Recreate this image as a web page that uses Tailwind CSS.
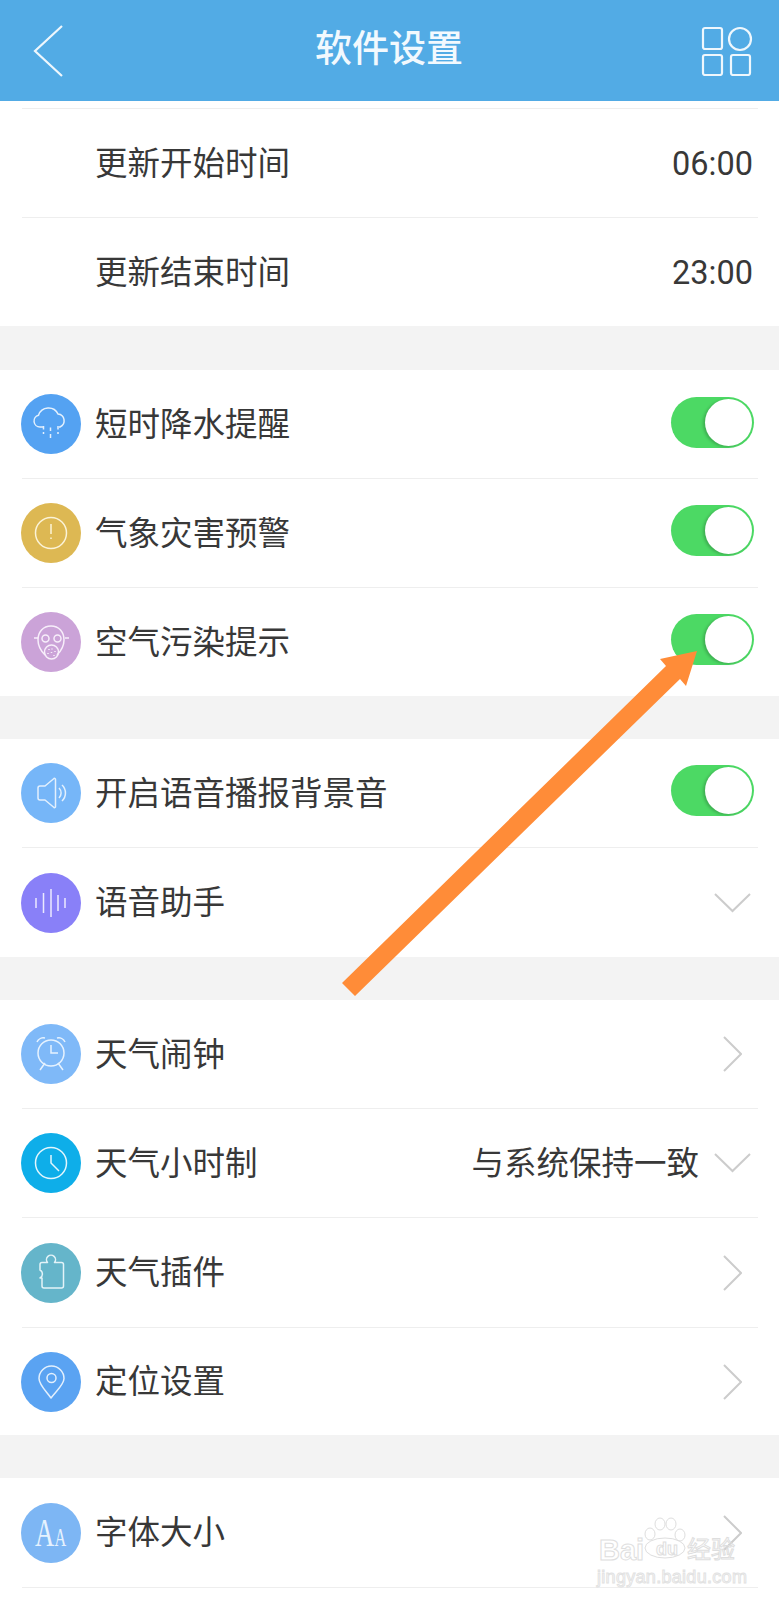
<!DOCTYPE html>
<html lang="zh-CN">
<head>
  <meta charset="UTF-8" />
  <meta name="viewport" content="width=device-width, initial-scale=1.0" />
  <title>软件设置</title>
  <script src="https://cdn.jsdelivr.net/npm/@tailwindcss/browser@4"></script>
</head>
<body class="bg-[#f3f3f3]">
<div class="relative w-[779px] h-[1600px] overflow-hidden bg-[#f3f3f3] text-[32.5px] leading-none text-[#383838] font-['Roboto','Noto_Sans_CJK_SC',sans-serif]">

  <!-- Header -->
  <header class="flex items-center justify-between h-[101px] pl-[33px] pr-[26px] bg-[#52abe5]">
    <svg class="w-[31px] h-[52px]" viewBox="0 0 31 52" fill="none" stroke="#eef7fd" stroke-width="2.2"><path d="M29 1 2 26l27 25"/></svg>
    <h1 class="ml-[13px] text-[37px] font-medium text-[#f2f9fe] mt-[-3px]">软件设置</h1>
    <svg class="w-[52px] h-[50px]" viewBox="0 0 52 50" fill="none" stroke="#eef7fd" stroke-width="2.2">
      <rect x="2" y="2" width="19" height="21" rx="2"/>
      <circle cx="39" cy="13" r="11"/>
      <rect x="2" y="29" width="19" height="20" rx="2"/>
      <rect x="30" y="29" width="19" height="20" rx="2"/>
    </svg>
  </header>

  <!-- Update times -->
  <section class="bg-white">
    <div class="ml-[22px] mr-[21px] h-[8px] border-b border-[#eeeeee]"></div>
    <div class="flex items-center justify-between ml-[22px] mr-[21px] h-[109px] pl-[73px] pr-[5px] border-b border-[#eeeeee]">
      <span class="mt-[2px]">更新开始时间</span><span class="mt-[2px]">06:00</span>
    </div>
    <div class="flex items-center justify-between ml-[22px] mr-[21px] h-[108px] pl-[73px] pr-[5px]">
      <span class="mt-[2px]">更新结束时间</span><span class="mt-[2px]">23:00</span>
    </div>
  </section>

  <!-- Reminders -->
  <section class="mt-[44px] bg-white">
    <div class="flex items-center ml-[22px] mr-[21px] h-[109px] pr-[4px] border-b border-[#eeeeee]">
      <svg class="w-[60px] h-[60px] shrink-0 -ml-[1px]" viewBox="0 0 60 60" fill="none" stroke="#e3f0fd" stroke-width="1.5">
        <circle cx="30" cy="30" r="30" fill="#54a2f2" stroke="none"/>
        <path d="M22 33h-3a6 6 0 0 1-1.500-11.800A10.500 10.500 0 0 1 37 20a6.800 6.800 0 0 1 2 13h-1"/>
        <path d="M22.500 32v3.500M22.500 38v2M29.500 33.500v3.500M29.500 40v4M37 32v3.500M37 38v2"/>
      </svg>
      <span class="ml-[14px] mt-[2px]">短时降水提醒</span>
      <div class="flex justify-end items-center ml-auto mb-[4px] w-[83px] h-[51px] p-[2px] rounded-full bg-[#4cd964]">
        <div class="w-[47px] h-[47px] rounded-full bg-white shadow-[-2px_1px_3px_rgba(0,0,0,0.2)]"></div>
      </div>
    </div>
    <div class="flex items-center ml-[22px] mr-[21px] h-[109px] pr-[4px] border-b border-[#eeeeee]">
      <svg class="w-[60px] h-[60px] shrink-0 -ml-[1px]" viewBox="0 0 60 60" fill="none" stroke="#fbf3d8" stroke-width="1.5">
        <circle cx="30" cy="30" r="30" fill="#ddb853" stroke="none"/>
        <circle cx="30" cy="30" r="15.500"/>
        <path d="M30 21v10M30 34.500v1.500"/>
      </svg>
      <span class="ml-[14px] mt-[2px]">气象灾害预警</span>
      <div class="flex justify-end items-center ml-auto mb-[5px] w-[83px] h-[51px] p-[2px] rounded-full bg-[#4cd964]">
        <div class="w-[47px] h-[47px] rounded-full bg-white shadow-[-2px_1px_3px_rgba(0,0,0,0.2)]"></div>
      </div>
    </div>
    <div class="flex items-center ml-[22px] mr-[21px] h-[108px] pr-[4px]">
      <svg class="w-[60px] h-[60px] shrink-0 -ml-[1px]" viewBox="0 0 60 60" fill="none" stroke="#f7eefa" stroke-width="1.5">
        <circle cx="30" cy="30" r="30" fill="#cba3d8" stroke="none"/>
        <path d="M24 43c-4-4-7-9-7-15 0-8 5-14 13-14s13 6 13 14c0 6-3 11-7 15"/>
        <circle cx="24.500" cy="26.500" r="3.500"/>
        <circle cx="36.500" cy="26.500" r="3.500"/>
        <circle cx="30.500" cy="40" r="7"/>
        <path d="M13 26h4M44 26h4M28 37v1M31 36.500v1M34 39v1M27 41v1M30.500 40v1M33 43v1"/>
      </svg>
      <span class="ml-[14px] mt-[2px]">空气污染提示</span>
      <div class="flex justify-end items-center ml-auto mb-[6px] w-[83px] h-[51px] p-[2px] rounded-full bg-[#4cd964]">
        <div class="w-[47px] h-[47px] rounded-full bg-white shadow-[-2px_1px_3px_rgba(0,0,0,0.2)]"></div>
      </div>
    </div>
  </section>

  <!-- Voice -->
  <section class="mt-[43px] bg-white">
    <div class="flex items-center ml-[22px] mr-[21px] h-[109px] pr-[4px] border-b border-[#eeeeee]">
      <svg class="w-[60px] h-[60px] shrink-0 -ml-[1px]" viewBox="0 0 60 60" fill="none" stroke="#e3f0fd" stroke-width="1.5">
        <circle cx="30" cy="30" r="30" fill="#76b6f8" stroke="none"/>
        <path d="M33 15.500a1 1 0 0 1 1.500 1v27a1 1 0 0 1-1.500 1L24 37h-5a2 2 0 0 1-2-2V25a2 2 0 0 1 2-2h5z" stroke-linejoin="round"/>
        <path d="M38 25a7 7 0 0 1 0 10M41 22a11 11 0 0 1 0 16"/>
      </svg>
      <span class="ml-[14px] mt-[2px]">开启语音播报背景音</span>
      <div class="flex justify-end items-center ml-auto mb-[6px] w-[83px] h-[51px] p-[2px] rounded-full bg-[#4cd964]">
        <div class="w-[47px] h-[47px] rounded-full bg-white shadow-[-2px_1px_3px_rgba(0,0,0,0.2)]"></div>
      </div>
    </div>
    <div class="flex items-center ml-[22px] mr-[21px] h-[109px] pr-[7px]">
      <svg class="w-[60px] h-[60px] shrink-0 -ml-[1px]" viewBox="0 0 60 60" fill="none" stroke="#ebe9fe" stroke-width="1.5">
        <circle cx="30" cy="30" r="30" fill="#8980f8" stroke="none"/>
        <path d="M15 25v10M22.500 20v20M30 16v28M37 22v16M44 25v10"/>
      </svg>
      <span class="ml-[14px] mt-[2px]">语音助手</span>
      <svg class="ml-auto w-[37px] h-[20px]" viewBox="0 0 37 20" fill="none" stroke="#cccccc" stroke-width="2"><path d="M1 1l17.500 17L36 1"/></svg>
    </div>
  </section>

  <!-- Weather tools -->
  <section class="mt-[43px] bg-white">
    <div class="flex items-center ml-[22px] mr-[21px] h-[109px] pr-[16px] border-b border-[#eeeeee]">
      <svg class="w-[60px] h-[60px] shrink-0 -ml-[1px]" viewBox="0 0 60 60" fill="none" stroke="#e6f2fe" stroke-width="1.5">
        <circle cx="30" cy="30" r="30" fill="#7fb9f8" stroke="none"/>
        <circle cx="30" cy="29" r="13"/>
        <path d="M30 21v8h7M24 39l-5 7M37 39l5 7M16 18a7 7 0 0 1 8-4M44 18a7 7 0 0 0-8-4"/>
      </svg>
      <span class="ml-[14px] mt-[2px]">天气闹钟</span>
      <svg class="ml-auto w-[19px] h-[36px]" viewBox="0 0 19 36" fill="none" stroke="#cccccc" stroke-width="2"><path d="M1 1l17 17L1 35"/></svg>
    </div>
    <div class="flex items-center ml-[22px] mr-[21px] h-[109px] pr-[7px] border-b border-[#eeeeee]">
      <svg class="w-[60px] h-[60px] shrink-0 -ml-[1px]" viewBox="0 0 60 60" fill="none" stroke="#e3f6fd" stroke-width="1.5">
        <circle cx="30" cy="30" r="30" fill="#0eaee9" stroke="none"/>
        <circle cx="30" cy="30" r="15.500"/>
        <path d="M30 22v8l8 8"/>
      </svg>
      <span class="ml-[14px] mt-[2px]">天气小时制</span>
      <span class="ml-auto mr-[15px] mt-[2px]">与系统保持一致</span>
      <svg class="w-[37px] h-[20px]" viewBox="0 0 37 20" fill="none" stroke="#cccccc" stroke-width="2"><path d="M1 1l17.500 17L36 1"/></svg>
    </div>
    <div class="flex items-center ml-[22px] mr-[21px] h-[110px] pr-[16px] border-b border-[#eeeeee]">
      <svg class="w-[60px] h-[60px] shrink-0 -ml-[1px]" viewBox="0 0 60 60" fill="none" stroke="#e3f3f8" stroke-width="1.5">
        <circle cx="30" cy="30" r="30" fill="#65b5ca" stroke="none"/>
        <path d="M19 27v-5.500a2 2 0 0 1 2-2h5.500a4.500 4.500 0 1 1 7 0h7a2 2 0 0 1 2 2V43a2 2 0 0 1-2 2H23a2 2 0 0 1-2-2v-8h-2a4.500 4.500 0 0 0 0-8z" stroke-linejoin="round"/>
      </svg>
      <span class="ml-[14px] mt-[2px]">天气插件</span>
      <svg class="ml-auto w-[19px] h-[36px]" viewBox="0 0 19 36" fill="none" stroke="#cccccc" stroke-width="2"><path d="M1 1l17 17L1 35"/></svg>
    </div>
    <div class="flex items-center ml-[22px] mr-[21px] h-[107px] pr-[16px]">
      <svg class="w-[60px] h-[60px] shrink-0 -ml-[1px]" viewBox="0 0 60 60" fill="none" stroke="#e3f0fd" stroke-width="1.5">
        <circle cx="30" cy="30" r="30" fill="#5aa3f2" stroke="none"/>
        <path d="M30 46C26 40 18 33 18 26.500a12.500 12.500 0 0 1 25 0C43 33 34 40 30 46z" stroke-linejoin="round"/>
        <circle cx="30.500" cy="26" r="4.500"/>
      </svg>
      <span class="ml-[14px] mt-[2px]">定位设置</span>
      <svg class="ml-auto w-[19px] h-[36px]" viewBox="0 0 19 36" fill="none" stroke="#cccccc" stroke-width="2"><path d="M1 1l17 17L1 35"/></svg>
    </div>
  </section>

  <!-- Font size -->
  <section class="mt-[43px] h-[122px] bg-white">
    <div class="flex items-center ml-[22px] mr-[21px] h-[110px] pr-[16px] border-b border-[#eeeeee]">
      <svg class="w-[60px] h-[60px] shrink-0 -ml-[1px]" viewBox="0 0 60 60">
        <circle cx="30" cy="30" r="30" fill="#7db6f4"/>
        <g transform="translate(14 43) scale(.65 1)" font-family="Liberation Serif" fill="#e6f2fe">
          <text font-size="41">A</text>
          <text x="30" font-size="25">A</text>
        </g>
      </svg>
      <span class="ml-[14px] mt-[2px]">字体大小</span>
      <svg class="ml-auto w-[19px] h-[36px]" viewBox="0 0 19 36" fill="none" stroke="#cccccc" stroke-width="2"><path d="M1 1l17 17L1 35"/></svg>
    </div>
  </section>

  <!-- Orange annotation arrow -->
  <svg class="absolute left-0 top-0 pointer-events-none" width="779" height="1600" viewBox="0 0 779 1600">
    <path d="M342 983 666 666 660 659 697 651 686 686 680 679 355 996z" fill="#ff8c38"/>
  </svg>

  <!-- Baidu watermark -->
  <div class="absolute left-[597px] top-[1527px] w-[145px] h-[58px] pointer-events-none text-transparent">
    <span class="absolute left-[2px] top-[9px] text-[29px] font-bold font-['Liberation_Sans',sans-serif] [-webkit-text-stroke:1px_#dedede]">Bai</span>
    <svg class="absolute left-[46px] top-[-10px] w-[44px] h-[42px]" viewBox="0 0 44 42" fill="none" stroke="#dedede" stroke-width="1">
      <ellipse cx="7" cy="17" rx="5" ry="6"/>
      <ellipse cx="17" cy="7" rx="5" ry="6"/>
      <ellipse cx="28" cy="7" rx="5" ry="6"/>
      <ellipse cx="37" cy="18" rx="5" ry="6"/>
      <ellipse cx="22" cy="31" rx="20" ry="10"/>
    </svg>
    <span class="absolute left-[59px] top-[13px] text-[18px] font-bold font-['Liberation_Sans',sans-serif] [-webkit-text-stroke:1px_#dedede]">du</span>
    <span class="absolute left-[90px] top-[9px] text-[24px] font-['Noto_Sans_CJK_SC',sans-serif] [-webkit-text-stroke:1px_#dedede]">经验</span>
    <span class="absolute left-0 top-[41px] text-[18px] tracking-[0.3px] font-['Liberation_Sans',sans-serif] [-webkit-text-stroke:1px_#e2e2e2]">jingyan.baidu.com</span>
  </div>
</div>
</body>
</html>
